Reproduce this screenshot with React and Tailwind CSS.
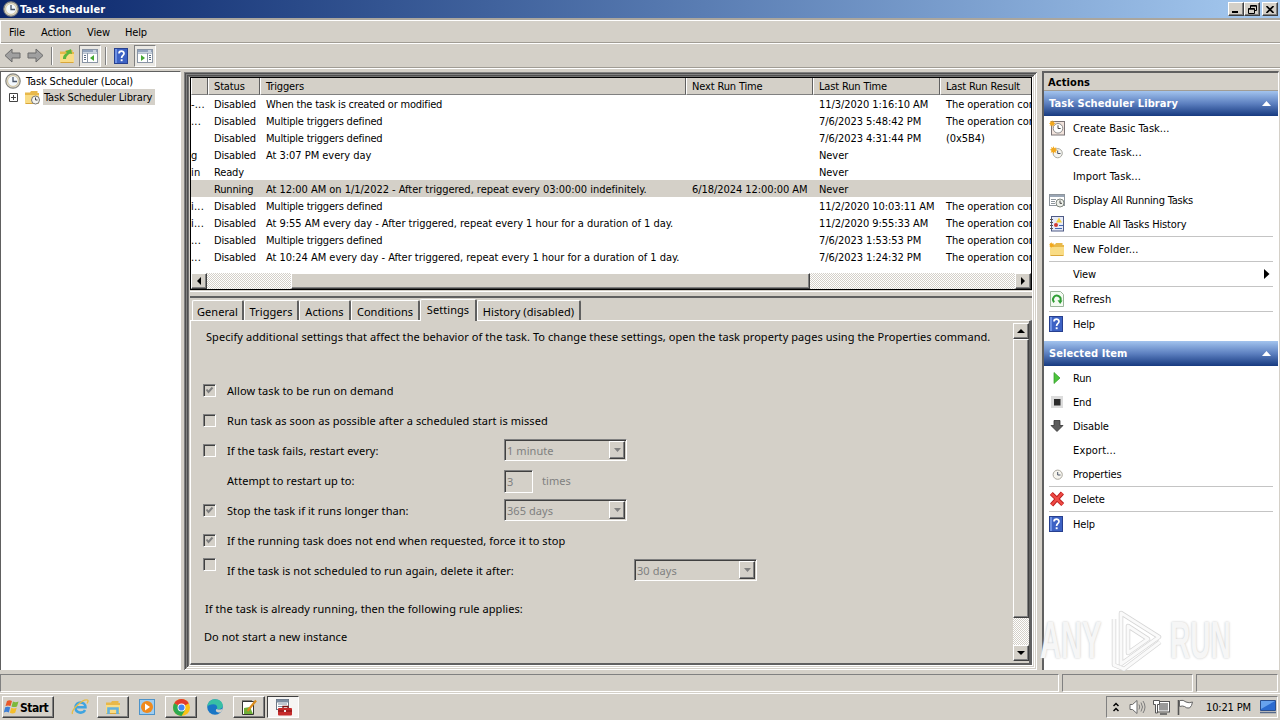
const btn = 'bg-[#d4d0c8] border border-t-white border-l-white border-b-[#404040] border-r-[#404040] shadow-[inset_-1px_-1px_0_#808080]';
const dither = 'bg-[repeating-conic-gradient(#fff_0_25%,#d4d0c8_0_50%)] bg-[length:2px_2px]';

const tasks = [
  { name: '-...', status: 'Disabled', trigger: 'When the task is created or modified', last: '11/3/2020 1:16:10 AM', result: 'The operation com' },
  { name: '...', status: 'Disabled', trigger: 'Multiple triggers defined', last: '7/6/2023 5:48:42 PM', result: 'The operation com' },
  { name: '', status: 'Disabled', trigger: 'Multiple triggers defined', last: '7/6/2023 4:31:44 PM', result: '(0x5B4)' },
  { name: 'g', status: 'Disabled', trigger: 'At 3:07 PM every day', last: 'Never', wide: true },
  { name: 'in', status: 'Ready', trigger: '', last: 'Never' },
  { name: '', status: 'Running', trigger: 'At 12:00 AM on 1/1/2022 - After triggered, repeat every 03:00:00 indefinitely.', next: '6/18/2024 12:00:00 AM', last: 'Never', selected: true, wide: true },
  { name: 'i...', status: 'Disabled', trigger: 'Multiple triggers defined', last: '11/2/2020 10:03:11 AM', result: 'The operation com' },
  { name: 'i...', status: 'Disabled', trigger: 'At 9:55 AM every day - After triggered, repeat every 1 hour for a duration of 1 day.', last: '11/2/2020 9:55:33 AM', result: 'The operation com', wide: true },
  { name: '...', status: 'Disabled', trigger: 'Multiple triggers defined', last: '7/6/2023 1:53:53 PM', result: 'The operation com' },
  { name: '...', status: 'Disabled', trigger: 'At 10:24 AM every day - After triggered, repeat every 1 hour for a duration of 1 day.', last: '7/6/2023 1:24:32 PM', result: 'The operation com', wide: true },
];

function Clock({ size = 16 }) {
  return (
    <svg width={size} height={size} viewBox="0 0 16 16" className="shrink-0">
      <circle cx="8" cy="8" r="7.2" fill="#e4dfd2" stroke="#85857f" strokeWidth="1.2" />
      <circle cx="8" cy="8" r="5.4" fill="#f3f8fd" stroke="#c9b98c" strokeWidth="0.8" />
      <path d="M8 4v4.5h4" fill="none" stroke="#4a5568" strokeWidth="1.3" />
    </svg>
  );
}

function HelpIcon() {
  return (
    <svg width="14" height="16" viewBox="0 0 14 16" className="shrink-0">
      <rect x="0.5" y="0.5" width="13" height="15" fill="#3d62c4" stroke="#27408f" />
      <path d="M1 1h2v14H1z" fill="#6f92e4" />
      <path d="M5 5.6C5 2.4 10 2.4 10 5.4 10 7.4 7.6 7.6 7.6 10" fill="none" stroke="#fff" strokeWidth="1.7" />
      <rect x="6.7" y="11.3" width="1.9" height="1.9" fill="#fff" />
    </svg>
  );
}

function Folder({ children }) {
  return (
    <svg width="16" height="16" viewBox="0 0 16 16" className="shrink-0">
      <path d="M1 3.5h5l1-1.5h6.5v2H15v10H1z" fill="#e8b84a" />
      <path d="M1 6h14v8.5H1z" fill="#f9dc85" />
      <path d="M1.5 14.5h13" stroke="#d9a63a" />
      {children}
    </svg>
  );
}

const star = <path d="M4.5 0l1 2.8L8 1.6 7 4.2l2.6.9L7 6.2 8 8.6 5.4 7.5 4.4 10 3.4 7.4.8 8.3 2 5.8-.4 4.8 2 3.9 1.2 1.4 3.6 2.6z" fill="#f2a81d" />;

function Win({ flip }) {
  return (
    <svg width="16" height="14" viewBox="0 0 16 14">
      <rect x="0.5" y="0.5" width="15" height="13" fill="#fff" stroke="#8a95a5" />
      <path d="M1 1h14v2.5H1z" fill="#93a4bd" />
      <path d="M11 2h3" stroke="#fff" />
      <path d="M1 4.5h14" stroke="#b9c2cf" />
      {flip ? (
        <>
          <path d="M4 6l4 3-4 3z" fill="#45a832" />
          <path d="M10.5 4v9" stroke="#8a95a5" />
          <path d="M12 6.5h2M12 8.5h2M12 10.5h2" stroke="#5d6d85" />
        </>
      ) : (
        <>
          <path d="M12 6L8 9l4 3z" fill="#45a832" />
          <path d="M5.5 4v9" stroke="#8a95a5" />
          <path d="M2 6.5h2M2 8.5h2M2 10.5h2" stroke="#5d6d85" />
        </>
      )}
    </svg>
  );
}

const icons = {
  basic: (
    <svg width="16" height="16" viewBox="0 0 16 16">
      <rect x="2.5" y="1.5" width="13" height="13.5" fill="#f1e3dc" stroke="#7b7476" />
      <circle cx="9" cy="8.3" r="4.8" fill="#fff" stroke="#8c8c8c" />
      <path d="M9 5.3v3.2h2.6" fill="none" stroke="#444" />
      <g transform="scale(.7)">{star}</g>
    </svg>
  ),
  create: (
    <svg width="16" height="16" viewBox="0 0 16 16">
      <circle cx="8.7" cy="9.2" r="4.6" fill="#f4f4f0" stroke="#a7a79f" />
      <path d="M8.7 6.5v3h2.8" fill="none" stroke="#4a5568" />
      <g transform="translate(1 2) scale(.8)">{star}</g>
    </svg>
  ),
  running: (
    <svg width="16" height="16" viewBox="0 0 16 16">
      <rect x="0.5" y="2.5" width="15" height="11" fill="#fff" stroke="#8e959c" />
      <path d="M1 3h14v2H1z" fill="#9aa6b5" />
      <path d="M2 7.5h5M2 9.5h4M2 11.5h4" stroke="#8e959c" />
      <circle cx="11" cy="11" r="4" fill="#eef0ea" stroke="#7f867f" />
      <path d="M11 8.5v2.8h2" fill="none" stroke="#444" />
    </svg>
  ),
  history: (
    <svg width="16" height="16" viewBox="0 0 16 16">
      <rect x="2.5" y="0.5" width="12" height="14.5" fill="#e7ebf8" stroke="#4e5b86" />
      <path d="M1 3.5h3M1 6.5h3M1 9.5h3M1 12.5h3" stroke="#555" />
      <path d="M10 1.5l3 5H7z" fill="#f3cf3a" />
      <circle cx="7" cy="9" r="2" fill="#d23b33" />
      <path d="M10 9.5h4M6 12.5h7" stroke="#4668b0" />
    </svg>
  ),
  newFolder: <Folder><g transform="translate(0 1) scale(.6)">{star}</g></Folder>,
  refresh: (
    <svg width="14" height="16" viewBox="0 0 14 16" className="ml-px">
      <path d="M.5.5h10l3 3v12H.5z" fill="#f4fbf2" stroke="#9bb49a" />
      <path d="M4.2 11.2A3.8 3.8 0 1 1 10.3 10" fill="none" stroke="#2f9e34" strokeWidth="1.9" />
      <path d="M7.5 9.2l5 .3-2.3 3.6z" fill="#2f9e34" />
    </svg>
  ),
  help: <HelpIcon />,
  run: (
    <svg width="16" height="16" viewBox="0 0 16 16">
      <path d="M5 2.5l6 5.5-6 5.5z" fill="#4cc53c" stroke="#2f9a26" strokeWidth=".7" />
    </svg>
  ),
  end: (
    <svg width="16" height="16" viewBox="0 0 16 16">
      <rect x="2" y="2" width="12" height="12" fill="#dcdcdc" />
      <rect x="5" y="5" width="6.5" height="6.5" fill="#2b2b2b" />
    </svg>
  ),
  disable: (
    <svg width="16" height="16" viewBox="0 0 16 16">
      <path d="M5 2.5h6v5h3l-6 6-6-6h3z" fill="#5c5c5c" stroke="#333" strokeWidth=".8" />
    </svg>
  ),
  props: (
    <svg width="16" height="16" viewBox="0 0 16 16">
      <circle cx="8.7" cy="8.7" r="4.6" fill="#f7f5ee" stroke="#aaa79e" />
      <path d="M8.7 6v3h2.8" fill="none" stroke="#4a5568" />
    </svg>
  ),
  del: (
    <svg width="16" height="16" viewBox="0 0 16 16">
      <path d="M2.3 2.6l11.4 11M13.4 2L2.6 14" stroke="#b81b1b" strokeWidth="4.2" />
      <path d="M2.3 2.6l11.4 11M13.4 2L2.6 14" stroke="#ee4a45" strokeWidth="2.6" />
    </svg>
  ),
};

function ActionItem({ icon, label, arrow, className = '' }) {
  return (
    <div className="flex h-6 items-center pl-[5px] pr-2">
      <span className="flex w-4 shrink-0">{icons[icon]}</span>
      <span className={`ml-2 flex-1 pt-0.5 ${className}`}>{label}</span>
      {arrow && <svg width="6" height="10" viewBox="0 0 6 10"><path d="M0 0l5.5 5L0 10z" fill="#000" /></svg>}
    </div>
  );
}

function Separator() {
  return <div className="mx-[5px] h-px bg-[#c4c4c4]" />;
}

function ActionHeader({ title }) {
  return (
    <div className="flex h-[25px] items-center justify-between bg-linear-to-b from-[#a3c4ee] via-[#5d80c0] to-[#173a80] pl-[5px] pr-[7px] text-[11px] font-bold tracking-[0.1px] text-white">
      <span className="pt-px">{title}</span>
      <svg width="9" height="5" viewBox="0 0 9 5"><path d="M4.5 0L9 5H0z" fill="#fff" /></svg>
    </div>
  );
}

function Check({ on }) {
  return (
    <span className="flex size-[13px] shrink-0 border border-b-white border-l-[#808080] border-r-white border-t-[#808080] shadow-[inset_1px_1px_0_#404040]">
      {on && <svg width="11" height="11" viewBox="0 0 11 11"><path d="M2.5 4.5l2 2.5 4-4.5" fill="none" stroke="#808080" strokeWidth="2" /></svg>}
    </span>
  );
}

function Combo({ value }) {
  return (
    <div className="flex h-[22px] w-[123px] border border-b-white border-l-[#808080] border-r-white border-t-[#808080] pl-0.5 text-[#808080] shadow-[inset_1px_1px_0_#404040]">
      <span className="flex-1 leading-[21px]">{value}</span>
      <span className={`my-px mr-px flex w-4 items-center justify-center ${btn}`}>
        <svg width="7" height="4" viewBox="0 0 7 4"><path d="M0 0h7L3.5 4z" fill="#808080" /></svg>
      </span>
    </div>
  );
}

function SettingRow({ check, label, children }) {
  return (
    <div className="flex h-[30px] items-center whitespace-nowrap">
      <div className="flex w-6 shrink-0">{check !== undefined && <Check on={check} />}</div>
      <span className="w-[277px] shrink-0 pt-0.5">{label}</span>
      {children}
    </div>
  );
}

function Row({ t }) {
  return (
    <div className={`flex h-[17px] whitespace-nowrap leading-[19px] ${t.selected ? 'bg-[#d4d0c8]' : ''}`}>
      <span className="w-[17px] shrink-0 overflow-hidden tracking-[0.2px]">{t.name}</span>
      <span className="w-[52px] shrink-0 pl-1.5">{t.status}</span>
      <span className={`w-[426px] shrink-0 pl-1.5 ${t.wide ? 'tracking-[-0.03px]' : 'tracking-[-0.2px]'}`}>{t.trigger}</span>
      <span className="w-[127px] shrink-0 pl-1.5 tracking-[-0.06px]">{t.next}</span>
      <span className="w-[127px] shrink-0 pl-1.5 tracking-[-0.06px]">{t.last}</span>
      <span className="pl-1.5 tracking-[-0.06px]">{t.result}</span>
    </div>
  );
}

function Head({ className, children }) {
  return (
    <span className={`shrink-0 border-b border-l border-r border-b-[#808080] border-l-white border-r-[#606060] bg-[#d4d0c8] pl-[5px] leading-[18px] ${className}`}>{children}</span>
  );
}

function Arrow({ d }) {
  return <svg width="8" height="8" viewBox="0 0 8 8"><path d={d} fill="#000" /></svg>;
}

function Tab({ className, children }) {
  return (
    <div className={`flex shrink-0 items-center justify-center whitespace-nowrap rounded-t-[2px] border-l border-r-2 border-t border-l-white border-r-[#606060] border-t-white ${className}`}>{children}</div>
  );
}

function Watermark() {
  return (
    <div className="absolute left-[1040px] top-[608px] flex h-[64px] w-[194px] items-center justify-between font-['Liberation_Sans',sans-serif] text-[52px] font-bold tracking-normal text-[#f6f6f6] [font-stretch:normal] [text-shadow:0_0_3px_#c2c2c2]">
      <span className="w-[62px]"><span className="inline-block origin-left scale-x-[.56]">ANY</span></span>
      <svg width="56" height="62" viewBox="0 0 56 62" className="shrink-0">
        <path d="M13 4l38 24-38 27zM20 17v27l20-14zM6 10v46l10 4 36-27" fill="none" stroke="#d6d6d6" strokeWidth="4.5" strokeLinejoin="round" />
        <path d="M13 4l38 24-38 27zM20 17v27l20-14zM6 10v46l10 4 36-27" fill="none" stroke="#fafafa" strokeWidth="3" strokeLinejoin="round" />
      </svg>
      <span className="w-[64px]"><span className="inline-block origin-left scale-x-[.54]">RUN</span></span>
    </div>
  );
}

function TaskButton({ children, className = '' }) {
  return <div className={`flex h-[22px] w-8 items-center justify-center ${className || btn}`}>{children}</div>;
}

export default function App() {
  return (
    <div className="relative flex h-[720px] w-[1280px] flex-col overflow-hidden bg-[#d4d0c8] font-['DejaVu_Sans_Condensed','DejaVu_Sans',sans-serif] text-[11px] leading-4 tracking-[-0.15px] text-black [font-stretch:condensed]">
      <div className="flex h-[18px] shrink-0 items-center bg-linear-to-r from-[#0a246a] to-[#a6caf0] pl-[3px] pr-0.5">
        <Clock />
        <span className="ml-px flex-1 pt-0.5 text-[11px] font-bold tracking-[0.1px] text-white">Task Scheduler</span>
        <div className={`flex h-3.5 w-4 items-end pb-0.5 pl-[3px] ${btn}`}><div className="h-0.5 w-1.5 bg-black" /></div>
        <div className={`flex h-3.5 w-4 items-center justify-center ${btn}`}>
          <svg width="9" height="9" viewBox="0 0 9 9"><path d="M2.5 3V.5h6v5H6M2.5 1.2h6M.5 3.5h6v5h-6zM.5 4.2h6" fill="none" stroke="#000" /></svg>
        </div>
        <div className={`ml-0.5 flex h-3.5 w-4 items-center justify-center ${btn}`}>
          <svg width="8" height="7" viewBox="0 0 8 7"><path d="M.5 0l7 7M7.5 0l-7 7" stroke="#000" strokeWidth="1.6" /></svg>
        </div>
      </div>

      <div className="flex h-[26px] shrink-0 items-center border-b border-t-2 border-b-white border-t-[#aaa69e] pl-[9px] pt-0.5 shadow-[inset_1px_1px_0_#fff,inset_0_-1px_0_#a09c94]">
        <span className="w-8">File</span>
        <span className="w-[46px]">Action</span>
        <span className="w-[38px]">View</span>
        <span>Help</span>
      </div>

      <div className="flex h-6 shrink-0 items-center border-b border-b-[#a09c94] pl-1">
        <svg width="17" height="15" viewBox="0 0 17 15"><path d="M1 7.5L8 1v4h8v5H8v4z" fill="#a0a0a0" stroke="#6a6a6a" /></svg>
        <svg className="ml-1.5" width="17" height="15" viewBox="0 0 17 15"><path d="M16 7.5L9 1v4H1v5h8v4z" fill="#a0a0a0" stroke="#6a6a6a" /></svg>
        <div className="ml-[7px] mr-1.5 h-[18px] w-0.5 border-l border-r border-l-[#808080] border-r-white" />
        <Folder><path d="M4 11c0-4 2-5 4-6L6.5 3.5 12 1l1 5-2-.5C9 7 7 8 7 11z" fill="#5cb53c" /></Folder>
        <div className="ml-1 flex h-[22px] w-[22px] items-center justify-center border border-b-white border-l-[#808080] border-r-white border-t-[#808080] bg-[#eae8e3]"><Win /></div>
        <div className="ml-1 mr-[7px] h-[18px] w-0.5 border-l border-r border-l-[#808080] border-r-white" />
        <HelpIcon />
        <div className="ml-1.5 flex h-[22px] w-[22px] items-center justify-center border border-b-white border-l-[#808080] border-r-white border-t-[#808080] bg-[#eae8e3]"><Win flip /></div>
      </div>

      <div className="flex h-[604px] shrink-0 border-t border-t-white pb-0.5 pt-0.5">
        <div className="w-[181px] shrink-0 border-l border-r border-t border-l-[#606060] border-r-white border-t-[#606060] bg-white pl-1">
          <div className="flex h-[17px] items-center">
            <Clock />
            <span className="ml-[5px] pt-0.5">Task Scheduler (Local)</span>
          </div>
          <div className="flex h-4 items-center pl-1">
            <svg width="9" height="9" viewBox="0 0 9 9"><path d="M.5.5h8v8h-8zM2 4.5h5M4.5 2v5" fill="none" stroke="#444" /></svg>
            <span className="ml-[6px]">
              <Folder>
                <circle cx="11.5" cy="11" r="4" fill="#f4f4f0" stroke="#777" />
                <path d="M11.500 8.500V11h2" fill="none" stroke="#444" />
              </Folder>
            </span>
            <span className="ml-[3px] h-4 w-[112px] whitespace-nowrap bg-[#d4d0c8] pl-px leading-[18px]">Task Scheduler Library</span>
          </div>
        </div>

        <div className="ml-[3px] mt-px flex w-[853px] shrink-0 flex-col pb-[5px] pl-[6px] pr-[5px] pt-[5px] shadow-[inset_1px_1px_0_#808080,inset_-1px_-1px_0_#fff,inset_2px_2px_0_#505050,inset_-2px_-2px_0_#d4d0c8,inset_3px_3px_0_#808080,inset_-3px_-3px_0_#fff,inset_4px_4px_0_#505050,inset_-4px_-4px_0_#d4d0c8,inset_5px_5px_0_#707070,inset_-5px_-5px_0_#fff]">
          <div className="h-[213px] shrink-0 overflow-hidden border border-black bg-white">
            <div className="flex h-[17px] whitespace-nowrap">
              <Head className="w-[17px]" />
              <Head className="w-[52px]">Status</Head>
              <Head className="w-[426px]">Triggers</Head>
              <Head className="w-[127px]">Next Run Time</Head>
              <Head className="w-[127px]">Last Run Time</Head>
              <Head className="w-[100px]">Last Run Result</Head>
            </div>
            <div className="h-[178px]">
              {tasks.map((t, i) => <Row key={i} t={t} />)}
            </div>
            <div className={`flex h-4 ${dither}`}>
              <div className={`flex w-4 items-center justify-center ${btn}`}><Arrow d="M6 0v8L2 4z" /></div>
              <div className={`ml-[84px] w-[519px] ${btn}`} />
              <div className={`ml-auto flex w-4 items-center justify-center ${btn}`}><Arrow d="M2 0v8l4-4z" /></div>
            </div>
          </div>

          <div className="flex h-2 shrink-0 flex-col justify-between pt-px"><div className="h-px bg-white" /><div className="h-0.5 bg-[#606060]" /></div>

          <div className="flex min-h-0 flex-1 flex-col font-['Noto_Sans',sans-serif] text-[11px] tracking-[0.07px] [font-stretch:normal]">
            <div className="flex h-[22px] shrink-0 items-end pl-0.5">
              <Tab className="h-5 w-[52px] pt-0.5">General</Tab>
              <Tab className="h-5 w-[55px] pt-0.5">Triggers</Tab>
              <Tab className="h-5 w-[52px] pt-0.5">Actions</Tab>
              <Tab className="h-5 w-[69px] pt-0.5">Conditions</Tab>
              <Tab className="relative z-10 -mb-px h-[22px] w-[57px] bg-[#d4d0c8] pb-px">Settings</Tab>
              <Tab className="h-5 w-[104px] pt-0.5">History (disabled)</Tab>
            </div>
            <div className="flex min-h-0 flex-1 border-b-2 border-l border-r-[3px] border-t border-b-[#606060] border-l-white border-r-[#606060] border-t-white">
              <div className="min-w-0 flex-1 pl-3">
                <div className="h-[54px] whitespace-nowrap pl-[3px] pt-2">Specify additional settings that affect the behavior of the task. To change these settings, open the task property pages using the Properties command.</div>
                <SettingRow check={true} label="Allow task to be run on demand" />
                <SettingRow check={false} label="Run task as soon as possible after a scheduled start is missed" />
                <SettingRow check={false} label="If the task fails, restart every:"><Combo value="1 minute" /></SettingRow>
                <SettingRow label="Attempt to restart up to:">
                  <div className="mt-0.5 h-[23px] w-[29px] border border-b-white border-l-[#808080] border-r-white border-t-[#808080] pl-0.5 leading-[21px] text-[#808080] shadow-[inset_1px_1px_0_#404040]">3</div>
                  <span className="ml-[9px] pt-0.5 text-[#808080]">times</span>
                </SettingRow>
                <SettingRow check={true} label="Stop the task if it runs longer than:"><Combo value="365 days" /></SettingRow>
                <SettingRow check={true} label="If the running task does not end when requested, force it to stop" />
                <div className="flex h-[30px] items-center whitespace-nowrap">
                  <div className="mb-[11px] w-6"><Check /></div>
                  <span className="w-[407px] pt-0.5">If the task is not scheduled to run again, delete it after:</span>
                  <Combo value="30 days" />
                </div>
                <div className="pl-0.5 pt-4">If the task is already running, then the following rule applies:</div>
                <div className="pl-px pt-3">Do not start a new instance</div>
              </div>
              <div className={`my-0.5 flex w-4 shrink-0 flex-col ${dither}`}>
                <div className={`flex h-4 items-center justify-center ${btn}`}><Arrow d="M0 6h8L4 2z" /></div>
                <div className={`h-[279px] ${btn}`} />
                <div className={`mt-auto flex h-4 items-center justify-center ${btn}`}><Arrow d="M0 2h8L4 6z" /></div>
              </div>
            </div>
          </div>
        </div>

        <div className="ml-[5px] w-[237px] border-l-2 border-r border-t-2 border-l-[#606060] border-r-white border-t-[#606060] bg-white">
          <div className="h-[18px] border-b border-b-[#a09c94] bg-[#d4d0c8] pl-1 text-[11px] font-bold leading-[19px] tracking-[0.1px]">Actions</div>
          <ActionHeader title="Task Scheduler Library" />
          <ActionItem icon="basic" label="Create Basic Task..." className="tracking-[0.02px]" />
          <ActionItem icon="create" label="Create Task..." className="tracking-[0.15px]" />
          <ActionItem label="Import Task..." className="tracking-[0.1px]" />
          <ActionItem icon="running" label="Display All Running Tasks" className="tracking-[-0.2px]" />
          <ActionItem icon="history" label="Enable All Tasks History" />
          <Separator />
          <ActionItem icon="newFolder" label="New Folder..." className="tracking-[0.15px]" />
          <Separator />
          <ActionItem label="View" arrow />
          <Separator />
          <ActionItem icon="refresh" label="Refresh" className="tracking-[0.15px]" />
          <Separator />
          <ActionItem icon="help" label="Help" />
          <div className="h-[5px]" />
          <ActionHeader title="Selected Item" />
          <ActionItem icon="run" label="Run" />
          <ActionItem icon="end" label="End" />
          <ActionItem icon="disable" label="Disable" />
          <ActionItem label="Export..." className="tracking-[0.15px]" />
          <ActionItem icon="props" label="Properties" />
          <Separator />
          <ActionItem icon="del" label="Delete" />
          <Separator />
          <ActionItem icon="help" label="Help" />
        </div>
      </div>

      <div className="flex h-[22px] shrink-0 gap-[3px] border-b border-b-white pb-px pr-0.5 pt-[2px]">
        <div className="w-[1059px] border border-b-white border-l-[#808080] border-r-white border-t-[#808080]" />
        <div className="w-[131px] border border-b-white border-l-[#808080] border-r-white border-t-[#808080]" />
        <div className="flex-1 border border-b-white border-l-[#808080] border-r-white border-t-[#808080]" />
      </div>

      <div className="flex flex-1 items-center pl-0.5 pr-0.5">
        <div className={`flex h-[22px] w-[52px] items-center pl-px text-[12px] font-bold tracking-[-0.5px] ${btn}`}>
          <svg width="16" height="16" viewBox="0 0 16 16" className="shrink-0">
            <path d="M3 2q2.500-1.500 5 0l-1.500 5q-2.500-1.200-5 0z" fill="#e8582a" />
            <path d="M9 2.500q2.500 1.500 5.500 0l-1.500 5q-2.700 1.200-5.500 0z" fill="#7cb93c" />
            <path d="M1.200 8.300q2.500-1.300 5 0L4.800 13.500q-2.500-1.500-5 0z" fill="#3d7fd6" />
            <path d="M7.300 8.800q2.600 1.300 5.400 0l-1.500 5q-2.700 1.300-5.300 0z" fill="#f4be2c" />
          </svg>
          <span className="pt-px">Start</span>
        </div>
        <svg className="ml-[17px]" width="18" height="18" viewBox="0 0 18 18">
          <path d="M4 9.300h10.500C14.500 2.800 4.500 2.800 4.500 9.500 4.500 15.500 12 16 14 12" fill="none" stroke="#3fa4e0" strokeWidth="2.500" />
          <path d="M1.500 16C-.5 12 12 .5 16.500 2c1 .5.500 2-.5 3.500" fill="none" stroke="#e8bd45" strokeWidth="1.300" />
        </svg>
        <div className="ml-2">
          <TaskButton>
            <Folder><path d="M3.500 15V9.500h9V15" fill="none" stroke="#63b1dd" strokeWidth="2.600" /></Folder>
          </TaskButton>
        </div>
        <svg className="ml-2.5" width="16" height="16" viewBox="0 0 16 16">
          <rect x="0.500" y="0.500" width="15" height="15" fill="#9fcdf0" stroke="#4d93c9" />
          <circle cx="8" cy="8" r="6" fill="#f08a1d" />
          <path d="M6 4.500l5 3.500-5 3.500z" fill="#fff" />
        </svg>
        <div className="ml-2.5">
          <TaskButton>
            <svg width="17" height="17" viewBox="0 0 16 16">
              <circle cx="8" cy="8" r="8" fill="#fbc116" />
              <path d="M8 8L1.100 4A8 8 0 0 1 14.900 4z" fill="#e33b2e" />
              <path d="M8 8L1.100 4A8 8 0 0 0 8 16l3.500-6z" fill="#2da94f" />
              <circle cx="8" cy="8" r="3.700" fill="#fff" />
              <circle cx="8" cy="8" r="2.900" fill="#4285f4" />
            </svg>
          </TaskButton>
        </div>
        <svg className="ml-2.5" width="16" height="16" viewBox="0 0 16 16">
          <circle cx="8" cy="8" r="7.800" fill="#1976c5" />
          <path d="M.3 7.500C1 2 5 .2 8.500.2c4 0 7.300 3 7.300 6.300 0 3-3 4-6 3.500 1-1 .5-4.800-3.300-4.800C3.500 5.200 1 6.500.3 7.500z" fill="#38bfa4" />
          <path d="M9.500 10c3 1 5 .5 6.200-.5-.3 1.500-1.200 3-2.200 4-3 .5-6-1-4-3.500z" fill="#d4d0c8" />
        </svg>
        <div className="ml-2.5">
          <TaskButton>
            <svg width="16" height="17" viewBox="0 0 16 17">
              <path d="M1.500 2.500h11v13h-11z" fill="#fff" stroke="#333" />
              <path d="M2 1v2M4 1v2M6 1v2M8 1v2M10 1v2" stroke="#333" />
              <path d="M3 9l6-1 3 7H3z" fill="#6fae37" />
              <path d="M6.500 12L15 1.500" stroke="#d98b1d" strokeWidth="2.200" />
            </svg>
          </TaskButton>
        </div>
        <div className="ml-0.5">
          <TaskButton className="border border-b-white border-l-[#404040] border-r-white border-t-[#404040] bg-[#f6f5f3]">
            <svg width="17" height="17" viewBox="0 0 17 17">
              <rect x="1.500" y="0.500" width="12" height="10" fill="#fff" stroke="#6b7784" />
              <path d="M2 1h11v2H2zM3 5h9M3 7.500h5" fill="#7c8da0" stroke="#7c8da0" />
              <path d="M8 9V7.500h5V9" fill="none" stroke="#7a1515" strokeWidth="1.300" />
              <rect x="3" y="9" width="14" height="7.500" rx="1" fill="#c62b2b" />
              <path d="M3 12h14" stroke="#7a1515" />
              <rect x="9" y="11" width="2" height="2" fill="#eee" />
            </svg>
          </TaskButton>
        </div>

        <div className="ml-auto flex h-[22px] w-[172px] items-center border border-b-white border-l-[#808080] border-r-white border-t-[#808080] pl-[6px]">
          <svg width="6" height="10" viewBox="0 0 6 10"><path d="M.5 4L3 1.500 5.500 4M.5 9L3 6.500 5.500 9" fill="none" stroke="#000" strokeWidth="1.500" /></svg>
          <svg className="ml-2.5" width="17" height="16" viewBox="0 0 17 16">
            <path d="M1 5.500h2.500L8 1.500v13L3.500 10.500H1z" fill="#fff" stroke="#6b6b6b" />
            <path d="M10 5.500q1.500 2.500 0 5M12 3.500q3 4.500 0 9M14 2q4 6 0 12" fill="none" stroke="#7c7c7c" />
          </svg>
          <svg className="ml-[7px]" width="17" height="16" viewBox="0 0 17 16">
            <rect x="5.500" y="3.500" width="10" height="8.500" fill="#999" stroke="#fff" />
            <rect x="4.500" y="2.500" width="12" height="10.500" fill="none" stroke="#555" />
            <path d="M7 15h7" stroke="#555" strokeWidth="1.500" />
            <path d="M.5 1.500h6v4h-2V14h-2V5.500h-2z" fill="#fff" stroke="#555" />
          </svg>
          <svg className="ml-[7px]" width="17" height="16" viewBox="0 0 17 16">
            <path d="M1.500 1v15" stroke="#555" strokeWidth="1.600" />
            <path d="M2.500 1.500q4-1 6.500 1.500 3 1.500 6.500 0-.5 4-3 6-3 .5-5-1.500-2-1-5 0z" fill="#fff" stroke="#666" />
          </svg>
          <span className="ml-3 whitespace-nowrap pt-px">10:21 PM</span>
          <svg className="ml-auto mr-px" width="16" height="14" viewBox="0 0 16 14">
            <path d="M.5.500h15v10H.5z" fill="#2b6bd0" stroke="#2a4f8f" />
            <path d="M1 1h14L1 9z" fill="#67a2ee" />
            <path d="M0 12.500h16" stroke="#55698a" strokeWidth="1.500" />
          </svg>
        </div>
      </div>

      <Watermark />
    </div>
  );
}
